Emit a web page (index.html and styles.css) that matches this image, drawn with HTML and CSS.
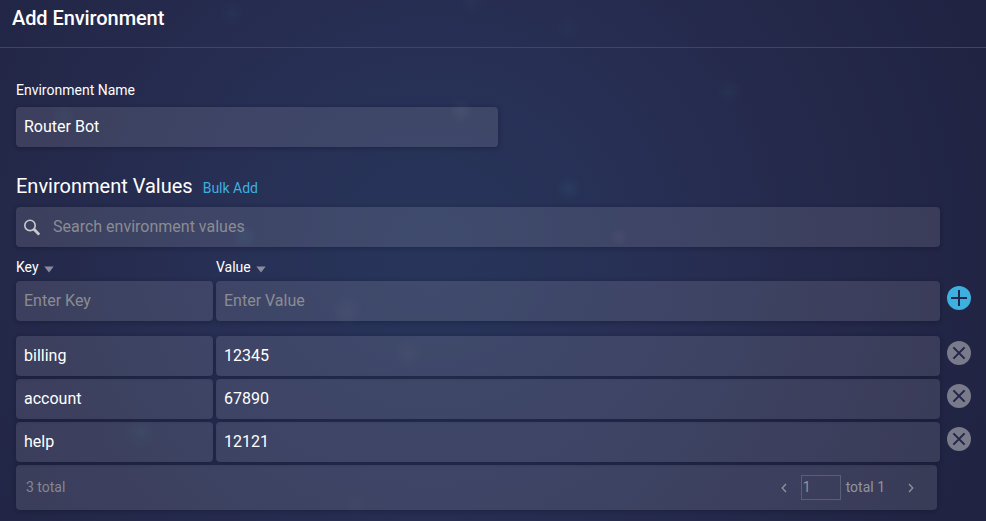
FILE: index.html
```
<!DOCTYPE html>
<html lang="en">
<head>
<meta charset="utf-8">
<title>Add Environment</title>
<link rel="stylesheet" href="styles.css">
</head>
<body>
<header class="header"><h1 class="title">Add Environment</h1></header>
<main class="content">
  <div class="label">Environment Name</div>
  <div class="field name-field">Router Bot</div>
  <div class="section-head">
    <h2 class="section-title">Environment Values</h2>
    <a class="bulk">Bulk Add</a>
  </div>
  <div class="field search">
    <svg class="search-icon" width="18" height="18" viewBox="0 0 18 18"><circle cx="6" cy="6.4" r="5.2" fill="none" stroke="#c9cacd" stroke-width="1.6"/><path d="M9.8 10L15.2 15.6" stroke="#c9cacd" stroke-width="2.8"/></svg>
    <span>Search environment values</span>
  </div>
  <div class="columns">
    <div class="column">Key <svg width="10" height="7" viewBox="0 0 10 7"><path d="M.3.5h9.4L5 6.6z" fill="#898c9d"/></svg></div>
    <div class="column">Value <svg width="10" height="7" viewBox="0 0 10 7"><path d="M.3.5h9.4L5 6.6z" fill="#898c9d"/></svg></div>
  </div>
  <div class="row entry">
    <div class="field hint">Enter Key</div>
    <div class="field hint">Enter Value</div>
    <svg class="action" viewBox="0 0 24 24"><circle cx="12" cy="12" r="12" fill="#3eb0e0"/><path d="M12 4v16M4 12h16" stroke="#20264a" stroke-width="2"/></svg>
  </div>
  <div class="row">
    <div class="field">billing</div>
    <div class="field">12345</div>
    <svg class="action" viewBox="0 0 24 24"><circle cx="12" cy="12" r="12" fill="#797b8b"/><path d="M6.4 6.4l11.2 11.2M17.6 6.4L6.4 17.6" stroke="#22254a" stroke-width="2"/></svg>
  </div>
  <div class="row">
    <div class="field">account</div>
    <div class="field">67890</div>
    <svg class="action" viewBox="0 0 24 24"><circle cx="12" cy="12" r="12" fill="#797b8b"/><path d="M6.4 6.4l11.2 11.2M17.6 6.4L6.4 17.6" stroke="#22254a" stroke-width="2"/></svg>
  </div>
  <div class="row">
    <div class="field">help</div>
    <div class="field">12121</div>
    <svg class="action" viewBox="0 0 24 24"><circle cx="12" cy="12" r="12" fill="#797b8b"/><path d="M6.4 6.4l11.2 11.2M17.6 6.4L6.4 17.6" stroke="#22254a" stroke-width="2"/></svg>
  </div>
  <footer class="field footer">
    <span>3 total</span>
    <div class="pager">
      <svg class="prev" width="6" height="10" viewBox="0 0 6 10"><path d="M5 1L1.2 5 5 9" fill="none" stroke="#92949b" stroke-width="1.3"/></svg>
      <div class="page">1</div>
      <span class="pages">total 1</span>
      <svg width="6" height="10" viewBox="0 0 6 10"><path d="M1 1l3.8 4L1 9" fill="none" stroke="#92949b" stroke-width="1.3"/></svg>
    </div>
  </footer>
</main>
</body>
</html>
```
FILE: styles.css
```
* { box-sizing: border-box; }
body {
  margin: 0;
  height: 521px;
  overflow: hidden;
  font-family: Roboto, "Liberation Sans", sans-serif;
  color: #fff;
  background:
    radial-gradient(circle at 569px 188px, rgba(45, 90, 120, .26), transparent 13px),
    radial-gradient(circle at 729px 91px, rgba(45, 75, 100, .2), transparent 13px),
    radial-gradient(circle at 568px 28px, rgba(45, 75, 100, .14), transparent 13px),
    radial-gradient(circle at 472px 2px, rgba(50, 80, 110, .16), transparent 13px),
    radial-gradient(circle at 232px 13px, rgba(45, 80, 110, .18), transparent 13px),
    radial-gradient(circle at 63px 117px, rgba(60, 90, 120, .12), transparent 13px),
    radial-gradient(circle at 461px 111px, rgba(90, 85, 110, .22), transparent 12px),
    radial-gradient(circle at 244px 237px, rgba(50, 90, 120, .2), transparent 12px),
    radial-gradient(circle at 619px 237px, rgba(90, 75, 105, .2), transparent 9px),
    radial-gradient(circle at 347px 311px, rgba(75, 80, 115, .24), transparent 16px),
    radial-gradient(circle at 408px 353px, rgba(75, 75, 110, .2), transparent 14px),
    radial-gradient(circle at 141px 432px, rgba(45, 85, 120, .2), transparent 15px),
    radial-gradient(circle at 355px 504px, rgba(60, 75, 105, .16), transparent 12px),
    radial-gradient(ellipse 590px 560px at 430px 250px, #28355b 0%, #272f54 38%, #242849 72%, #202342 100%);
}
.header {
  height: 48px;
  padding: 6px 12px;
  border-bottom: 1px solid #41455f;
}
.title { margin: 0; font-size: 20px; line-height: 24px; font-weight: 500; letter-spacing: -.08px; }
.content { padding: 32px 15px 0 16px; }
.label { height: 27px; font-size: 14px; line-height: 20px; }
.field {
  height: 40px;
  padding: 0 8px;
  border-radius: 4px;
  background: rgba(255, 255, 255, .11);
  box-shadow: 0 1px 5px rgba(10, 12, 30, .32);
  font-size: 16px;
  line-height: 39px;
}
.name-field { width: 482px; }
.section-head {
  display: flex;
  align-items: baseline;
  gap: 10px;
  height: 60px;
  padding-top: 27px;
}
.section-title { margin: 0; font-size: 20px; line-height: 24px; font-weight: 400; }
.bulk { color: #3eb0e0; font-size: 14px; }
.search {
  display: flex;
  gap: 11px;
  width: 924px;
  color: #8b8c93;
}
.search-icon { margin-top: 12px; }
.columns, .row {
  display: grid;
  grid-template-columns: 197px 724px 24px;
  column-gap: 3px;
}
.columns { height: 34px; padding-top: 10px; font-size: 14px; line-height: 20px; }
.column { display: flex; gap: 5px; }
.column svg { margin-top: 9px; }
.row { margin-bottom: 3px; }
.entry { margin-bottom: 15px; }
.hint { color: #8b8c93; }
.action { width: 24px; height: 24px; margin: 5px 0 0 4px; }
.footer {
  display: flex;
  justify-content: space-between;
  align-items: center;
  width: 921px;
  height: 45px;
  padding: 0 23px 0 10px;
  color: #85878e;
  font-size: 14px;
}
.pager { display: flex; align-items: center; color: #92949b; }
.prev { margin-right: 14px; }
.page { width: 40px; height: 25px; padding-left: 1px; border: 1px solid #5b5e77; line-height: 23px; }
.pages { margin: 0 23px 0 5px; }
```
